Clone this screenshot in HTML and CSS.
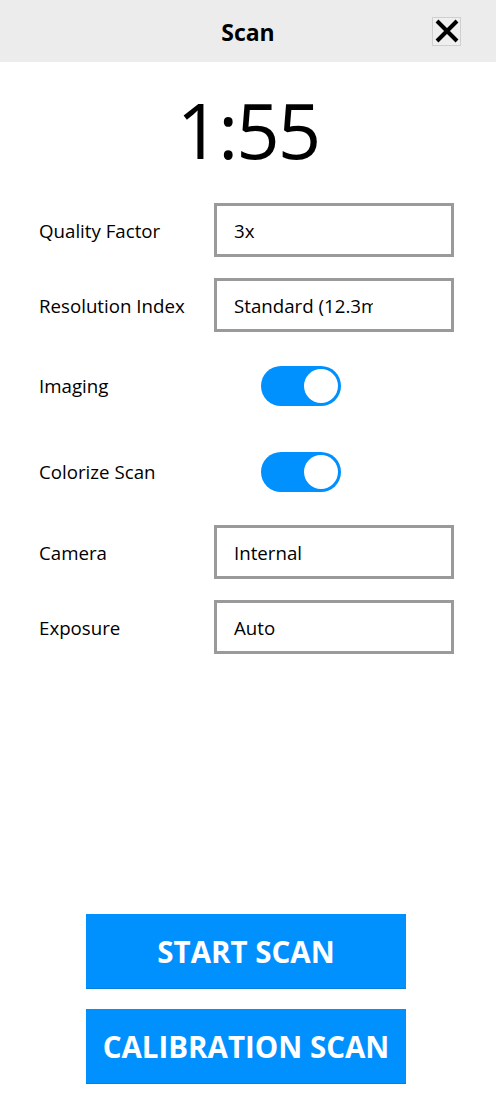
FILE: index.html
```html
<html>
    <head>
        <title>Scan</title>
        <link rel="stylesheet" href="styles.css">
    </head>
    <body>
        <div class="scan_page">
            <div class="scan_header">
                <div></div>
                <h1>Scan</h1>
                <button class="close_btn" title="Close">
                    <svg width="26" height="24" viewBox="0 0 26 24">
                        <path d="M3 2 L23 22 M23 2 L3 22" stroke="#000" stroke-width="4" fill="none"/>
                    </svg>
                </button>
            </div>
            <div class="timer">1:55</div>
            <div class="settings">
                <div class="row">
                    <label>Quality Factor</label>
                    <div class="field"><span>3x</span></div>
                </div>
                <div class="row">
                    <label>Resolution Index</label>
                    <div class="field"><span>Standard (12.3mm)</span></div>
                </div>
                <div class="row toggle_row">
                    <label>Imaging</label>
                    <div class="toggle on"><span class="knob"></span></div>
                </div>
                <div class="row toggle_row">
                    <label>Colorize Scan</label>
                    <div class="toggle on"><span class="knob"></span></div>
                </div>
                <div class="row">
                    <label>Camera</label>
                    <div class="field"><span>Internal</span></div>
                </div>
                <div class="row">
                    <label>Exposure</label>
                    <div class="field"><span>Auto</span></div>
                </div>
            </div>
            <div class="actions">
                <button class="action_btn">START SCAN</button>
                <button class="action_btn">CALIBRATION SCAN</button>
            </div>
        </div>
    </body>
</html>
```
FILE: styles.css
```css
body {
    margin: 0;
    background: #fff;
    color: #000;
    font-family: "Open Sans", "Noto Sans", sans-serif;
}
.scan_page {
    display: flex;
    flex-direction: column;
    min-height: 100vh;
}
.scan_header {
    height: 62px;
    background: #ececec;
    display: grid;
    grid-template-columns: 1fr auto 1fr;
    align-items: center;
}
.scan_header h1 {
    margin: 0;
    font-size: 23px;
    font-weight: 700;
    padding-top: 2px;
}
.close_btn {
    justify-self: end;
    margin-right: 35px;
    width: 29px;
    height: 29px;
    padding: 0;
    border: 1px solid #cfcfcf;
    background: #efefef;
    display: flex;
    align-items: center;
    justify-content: center;
    cursor: pointer;
}
.timer {
    text-align: center;
    font-size: 76px;
    font-weight: 400;
    line-height: 1;
    margin: 30px 0 35px 0;
    letter-spacing: -2px;
}
.settings {
    display: flex;
    flex-direction: column;
    gap: 21px;
    padding: 0 42px 0 39px;
}
.row {
    display: grid;
    grid-template-columns: 175px 1fr;
    align-items: center;
    height: 54px;
}
.row label {
    font-size: 18.7px;
}
.toggle_row {
    height: 65px;
}
.field {
    height: 54px;
    box-sizing: border-box;
    border: 3px solid #9a9a9a;
    padding: 0 0 0 17px;
    font-size: 18.7px;
    line-height: 50px;
}
.field span {
    display: block;
    width: 139px;
    white-space: nowrap;
    overflow: hidden;
}
.toggle {
    margin-left: 47px;
    width: 80px;
    height: 40px;
    border-radius: 20px;
    background: #0091ff;
    box-sizing: border-box;
    padding: 3px;
    display: flex;
}
.toggle.on {
    justify-content: flex-end;
}
.knob {
    width: 34px;
    height: 34px;
    border-radius: 50%;
    background: #fff;
}
.actions {
    margin-top: auto;
    display: flex;
    flex-direction: column;
    align-items: center;
    gap: 20px;
    padding: 0 4px 19px 0;
}
.action_btn {
    width: 320px;
    height: 75px;
    border: none;
    border-bottom: 1px solid #0a7fd9;
    background: #0091ff;
    color: #fff;
    font-family: "Open Sans", "Noto Sans", sans-serif;
    font-size: 29.5px;
    font-weight: 700;
    cursor: pointer;
    padding: 0;
}
```
